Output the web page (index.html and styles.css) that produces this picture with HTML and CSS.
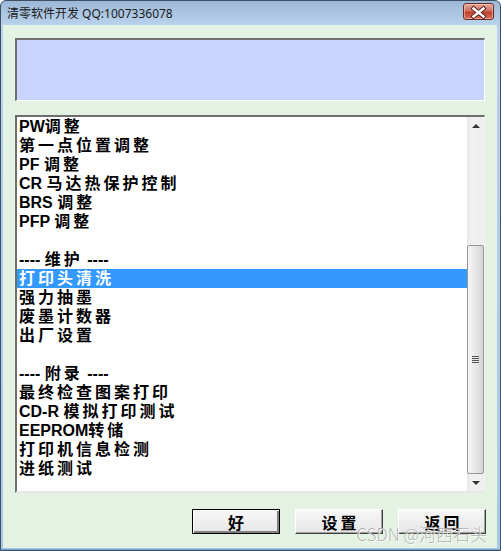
FILE: index.html
```html
<!doctype html>
<html lang="zh-CN">
  <head>
    <meta charset="UTF-8" />
    <title>清零软件开发</title>
    <link rel="stylesheet" href="styles.css">
  </head>
  <body>
    <div class="window">
      <div class="titlebar">
        <span class="title">清零软件开发 QQ:1007336078</span>
        <div class="close">
          <svg width="29" height="17" viewBox="0 0 29 17">
            <path d="M9.5 4.5 L19.5 12.5 M19.5 4.5 L9.5 12.5" stroke="#5a1c14" stroke-width="4.2" stroke-linecap="square" fill="none" />
            <path d="M9.5 4.5 L19.5 12.5 M19.5 4.5 L9.5 12.5" stroke="#fff" stroke-width="2.4" stroke-linecap="square" fill="none" />
          </svg>
        </div>
      </div>
      <div class="client">
        <div class="info"></div>
        <div class="list">
          <ul class="items">
            <li><span class="en">PW</span>调整</li>
            <li>第一点位置调整</li>
            <li><span class="en">PF </span>调整</li>
            <li><span class="en">CR </span>马达热保护控制</li>
            <li><span class="en">BRS </span>调整</li>
            <li><span class="en">PFP </span>调整</li>
            <li></li>
            <li><span class="en">---- </span>维护<span class="en"> ----</span></li>
            <li class="selected">打印头清洗</li>
            <li>强力抽墨</li>
            <li>废墨计数器</li>
            <li>出厂设置</li>
            <li></li>
            <li><span class="en">---- </span>附录<span class="en"> ----</span></li>
            <li>最终检查图案打印</li>
            <li><span class="en">CD-R </span>模拟打印测试</li>
            <li><span class="en">EEPROM</span>转储</li>
            <li>打印机信息检测</li>
            <li>进纸测试</li>
          </ul>
          <div class="scrollbar">
            <div class="arrow up"></div>
            <div class="track">
              <div class="thumb"><span class="grip"></span></div>
            </div>
            <div class="arrow down"></div>
          </div>
        </div>
        <div class="buttons">
          <button class="btn default">好</button>
          <button class="btn">设置</button>
          <button class="btn">返回</button>
        </div>
        <div class="watermark">CSDN @河西石头</div>
      </div>
    </div>
  </body>
</html>
```

FILE: styles.css
```css
* {
  margin: 0;
  padding: 0;
  box-sizing: border-box;
}
body {
  width: 501px;
  height: 551px;
  overflow: hidden;
  background: #fff;
  font-family: "Noto Sans", "Noto Sans CJK SC", sans-serif;
}
.window {
  width: 501px;
  height: 551px;
  display: flex;
  flex-direction: column;
  border: 1px solid #3e4f66;
  border-radius: 6px 6px 0 0;
  padding: 0 3px 2px 2px;
  background: linear-gradient(#9db8d7, #b9d2ec 24px, #a9c8e6);
  box-shadow: inset 0 -1px #6fa4d2;
}
.titlebar {
  height: 24px;
  display: flex;
  align-items: center;
  padding: 0 3px 0 4px;
}
.titlebar .title {
  font-size: 12px;
  color: #1a1a1a;
  margin-top: -1px;
}
.titlebar .close {
  margin-left: auto;
  margin-top: -3px;
  width: 31px;
  height: 17px;
  display: flex;
  justify-content: center;
  border: 1px solid #6b2a22;
  border-radius: 3px;
  background: linear-gradient(#e3a89c, #cf7262 45%, #c0402c 55%, #d3705c);
  box-shadow: inset 0 0 0 1px rgba(255, 220, 210, 0.5);
}
.client {
  position: relative;
  flex: 1;
  background: #e3f2e3;
  padding: 13px 12px 0 12px;
  display: flex;
  flex-direction: column;
}
.info {
  height: 63px;
  background: #c8d4fd;
  border-style: solid;
  border-width: 2px 1px 1px 2px;
  border-color: #6e6e6e #fff #fff #6e6e6e;
}
.list {
  margin-top: 14px;
  height: 378px;
  display: flex;
  background: #fff;
  border-style: solid;
  border-width: 2px 1px 2px 2px;
  border-color: #6e6e6e #f4f4f4 #e8e8e8 #6e6e6e;
}
.items {
  flex: 1;
  list-style: none;
  font-family: "Liberation Sans", "Noto Sans CJK SC", sans-serif;
  font-weight: bold;
  font-size: 16px;
  letter-spacing: 3px;
  color: #000;
}
.items li {
  height: 19px;
  line-height: 19px;
  padding-left: 2px;
  white-space: pre;
}
.items li.selected {
  background: #3399ff;
  color: #fff;
}
.items .en {
  letter-spacing: 0;
}
.scrollbar {
  width: 17px;
  display: flex;
  flex-direction: column;
  background: linear-gradient(90deg, #e8e8e8, #f2f2f2 30%, #eeeeee);
}
.scrollbar .arrow {
  height: 17px;
  display: flex;
  align-items: center;
  justify-content: center;
}
.scrollbar .arrow::before {
  content: "";
  border-left: 4px solid transparent;
  border-right: 4px solid transparent;
}
.scrollbar .arrow.up::before {
  border-bottom: 4px solid #333;
}
.scrollbar .arrow.down::before {
  border-top: 4px solid #333;
}
.scrollbar .track {
  flex: 1;
  display: flex;
  flex-direction: column;
  justify-content: flex-end;
}
.scrollbar .thumb {
  height: 229px;
  border: 1px solid #979797;
  border-radius: 2px;
  background: linear-gradient(90deg, #f6f6f6, #e9e9e9 45%, #d3d3d3);
  display: flex;
  align-items: center;
  justify-content: center;
}
.scrollbar .grip {
  width: 7px;
  height: 8px;
  background: repeating-linear-gradient(#555 0 1px, #e8e8e8 1px 2px);
}
.buttons {
  margin-top: 16px;
  margin-right: -1px;
  display: flex;
  justify-content: flex-end;
  gap: 15px;
}
.btn {
  width: 88px;
  height: 25px;
  font-family: "Liberation Sans", "Noto Sans CJK SC", sans-serif;
  font-weight: bold;
  font-size: 16px;
  letter-spacing: 3px;
  text-indent: 3px;
  color: #000;
  background: linear-gradient(#f7f7f7, #e6e6e6);
  border: 1px solid;
  border-color: #fff #404040 #404040 #fff;
  box-shadow: inset -1px -1px #a0a0a0;
}
.btn.default {
  border-color: #000;
  box-shadow: inset 1px 1px #fff, inset -2px -2px #808080;
}
.watermark {
  position: absolute;
  right: 10px;
  bottom: 2px;
  font-family: "Noto Sans CJK SC", sans-serif;
  font-weight: 300;
  font-size: 17px;
  color: rgba(110, 110, 110, 0.55);
  text-shadow: 0 0 1px #fff, 1px 1px 0 rgba(255, 255, 255, 0.8);
}
```
